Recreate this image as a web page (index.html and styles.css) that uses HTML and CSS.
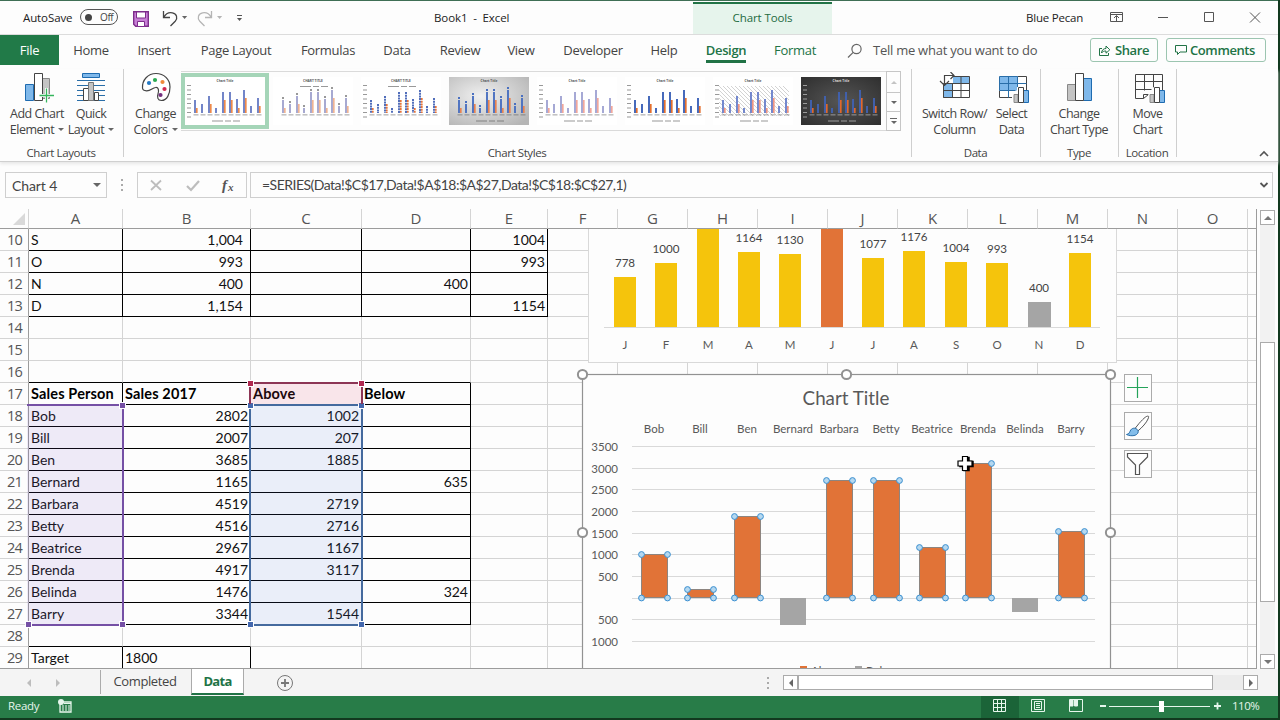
FILE: index.html
```html
<!DOCTYPE html>
<html lang="en">
<head>
<meta charset="utf-8">
<title>Book1 - Excel</title>
<link rel="stylesheet" href="styles.css">
</head>
<body>
<div class="window">
  <header class="titlebar">
    <span class="autosave">AutoSave</span>
    <span class="toggle"><i></i>Off</span>
    <svg class="quick" width="120" height="32" viewBox="130 1 120 32" fill="none">
      <path d="M133.7 10.700h14.6v14.6h-12.6l-2-2z" fill="#c77fd6" stroke="#7d2d8b" stroke-width="1.4"/>
      <path d="M136.500 11h9v6h-9z" fill="#fff" stroke="#7d2d8b"/><path d="M137.500 20.500h7v5h-7z" fill="#fff" stroke="#7d2d8b"/>
      <path d="M163.500 10v6.500h6.500M163.800 16.200c2-3.600 5.500-5 8.600-4.400 4.300.8 5.700 5.200 2.800 8.400L170.500 25" stroke="#444" stroke-width="1.300"/>
      <path d="M182 15h5.200l-2.600 3z" fill="#666"/>
      <path d="M211.500 10v6.500h-6.500M211.200 16.200c-2-3.600-5.500-5-8.600-4.400-4.300.8-5.700 5.200-2.800 8.400L204.500 25" stroke="#b5b5b5" stroke-width="1.300"/>
      <path d="M217 15h5.200l-2.600 3z" fill="#b5b5b5"/>
      <path d="M237 14.500h5" stroke="#555"/><path d="M237 17h5l-2.500 3z" fill="#555"/>
    </svg>
    <span class="doc">Book1&nbsp; -&nbsp; Excel</span>
    <span class="context">Chart Tools</span>
    <span class="user">Blue Pecan</span>
    <svg class="controls" width="160" height="32" viewBox="1105 1 160 32" fill="none" stroke="#555">
      <path d="M1110.500 11.500h12v9h-12zM1110.500 13.500h12M1116.500 20v-5M1114 17l2.500-2.500 2.500 2.500"/>
      <path d="M1158 16.500h10M1204.500 11.500h9v9h-9zM1250 11.500l10 10M1260 11.500l-10 10"/>
    </svg>
  </header>

  <nav class="tabs">
    <a class="tab file">File</a><a class="tab home">Home</a><a class="tab insert">Insert</a><a class="tab layout">Page Layout</a><a class="tab formulas">Formulas</a><a class="tab data">Data</a><a class="tab review">Review</a><a class="tab view">View</a><a class="tab developer">Developer</a><a class="tab help">Help</a><a class="tab design"><b>Design</b></a><a class="tab format">Format</a>
    <svg class="search" width="16" height="16" viewBox="0 0 16 16" fill="none" stroke="#666" stroke-width="1.200"><circle cx="9.500" cy="6" r="4.600"/><path d="M6.200 9.300L1 14.500"/></svg>
    <span class="tell">Tell me what you want to do</span>
    <a class="pill share"><svg width="13" height="13" viewBox="0 0 13 13" fill="none" stroke="#217346"><path d="M4 4.500H1.500v7h9V9M3.500 9c.3-3 2-4.500 4.500-4.500V2l3.800 3.800L8 9.200V7c-2 0-3.500.5-4.500 2z"/></svg>Share</a>
    <a class="pill comments"><svg width="12" height="12" viewBox="0 0 12 12" fill="none" stroke="#217346"><path d="M.5 1.500h11v6.500H5L2.500 10.500V8h-2z"/></svg>Comments</a>
  </nav>

  <section class="ribbon">
    <div class="group g-layouts">
      <div class="items">
        <div class="big add"><svg width="32" height="32" viewBox="0 0 32 32"><path d="M3.500 12.500h8v16h-8z" fill="#7fb8ea" stroke="#1e6bb0"/><path d="M20.500 6.500h7v20h-7z" fill="#c4c4c4" stroke="#888"/><path d="M12.500 1.500h8v27h-8z" fill="#fff" stroke="#444"/><path d="M24.500 16v15M17 23.500h15" stroke="#fff" stroke-width="3"/><path d="M24.500 16.500v14M17.500 23.500h14.500" stroke="#35b55c" stroke-width="1.300"/></svg><span>Add Chart</span><span>Element<i class="dd"></i></span></div>
        <div class="big quickl"><svg width="32" height="32" viewBox="0 0 32 32"><path d="M7.500 1.500h17v4h-17z" fill="#7fb8ea" stroke="#1e6bb0"/><path d="M2 8.500h28M2 13.500h28M2 18.500h28M2 23.500h28M2 28.500h28" stroke="#2a6ea8" stroke-width="1.200"/><path d="M8.500 16.500h6v12h-6zM19.500 20.500h4v8h-4z" fill="#fff" stroke="#444"/><path d="M13.500 10.500h5v18h-5z" fill="#c4c4c4" stroke="#777"/></svg><span>Quick</span><span>Layout<i class="dd"></i></span></div>
      </div><p>Chart Layouts</p>
    </div>
    <div class="group g-styles">
      <div class="items">
        <div class="big colors"><svg width="32" height="32" viewBox="0 0 32 32"><path d="M2.500 16C2 8 8 1.500 16 1.500s14 6 14 13.500c0 7-3 13.500-8.500 13.500-4 0-4.500-3.500-3.500-6.500 1.200-3.500.5-7-2.500-6.500-3 .4-5 3.500-9 3.300-2.500-.1-3.800-1-4-2.800z" fill="#fff" stroke="#444" stroke-width="1.200"/><circle cx="9" cy="11" r="2.100" fill="#2479c4"/><circle cx="15" cy="8" r="2.100" fill="#2bab54"/><circle cx="22.500" cy="10" r="2.100" fill="#f0883a"/><circle cx="24.500" cy="17" r="2.100" fill="#d1284f"/><circle cx="20.500" cy="23" r="2.100" fill="#74307f"/></svg><span>Change</span><span>Colors<i class="dd"></i></span></div>
        <div class="gallery" id="gallery"></div>
        <div class="spin"><b class="up"></b><b class="down"></b><b class="more"></b></div>
      </div><p>Chart Styles</p>
    </div>
    <div class="group g-data">
      <div class="items">
        <div class="big switch"><svg width="32" height="32" viewBox="0 0 32 32" fill="none"><path d="M4.500 4.500h26v21h-26z" fill="#fff"/><path d="M13 4.500h17.500v7H13zM4.500 11.500h9v14h-9z" fill="#7fb8ea"/><path d="M4.500 25.500v-8M13.500 4.500h17v21h-26v-14M4.500 18.500h26M4.500 11.500h26M13.500 4.500v21M22 4.500v21" stroke="#444"/><path d="M2 0h12v11H2z" fill="#fff"/><path d="M15 3.500H5.500V13M11.500 0L15 3.500 11.500 7M1 9L5.500 13.500 10 9" stroke="#444" stroke-width="1.200"/></svg><span>Switch Row/</span><span>Column</span></div>
        <div class="big select"><svg width="32" height="32" viewBox="0 0 32 32" fill="none"><path d="M2.500 4.500h27v21h-27z" fill="#fff"/><path d="M2.500 4.500h18v14h-18z" fill="#7fb8ea"/><path d="M20.500 4.500h9v14M2.500 18.500v7h14" stroke="#444"/><path d="M20.500 4.500h-18v14M2.500 11.500h27M2.500 18.500h16M11.500 4.500v21M20.500 4.500v14" stroke="#2a6ea8"/><path d="M15 21h5v-6h8v4h4v13H15z" fill="#fff"/><path d="M17 22.500h4v8h-4z" fill="#c4c4c4" stroke="#888"/><path d="M26.500 18.500h5v12h-5z" fill="#7fb8ea" stroke="#1e6bb0"/><path d="M21.500 15.500h5v15h-5z" fill="#fff" stroke="#444"/></svg><span>Select</span><span>Data</span></div>
      </div><p>Data</p>
    </div>
    <div class="group g-type">
      <div class="items"><div class="big type"><svg width="32" height="32" viewBox="0 0 32 32"><path d="M3.500 12.500h8v16h-8z" fill="#c4c4c4" stroke="#888"/><path d="M19.500 6.500h8v22h-8z" fill="#7fb8ea" stroke="#1e6bb0"/><path d="M11.500 1.500h8v27h-8z" fill="#fff" stroke="#444"/></svg><span>Change</span><span>Chart Type</span></div></div><p>Type</p>
    </div>
    <div class="group g-loc">
      <div class="items"><div class="big move"><svg width="32" height="32" viewBox="0 0 32 32" fill="none"><path d="M2.500 2.500h27v16M2.500 2.500v24h8l5-4M2.500 9.500h27M2.500 17.500h16M11.500 2.500v16M20.500 2.500v13" stroke="#444"/><path d="M10.500 26.500v-4h5" stroke="#444"/><path d="M15.500 21h5v-6h8v4h4v13h-17z" fill="#fff"/><path d="M17 22.500h4v8h-4z" fill="#c4c4c4" stroke="#888"/><path d="M26.500 18.500h5v12h-5z" fill="#7fb8ea" stroke="#1e6bb0"/><path d="M21.500 15.500h5v15h-5z" fill="#fff" stroke="#444"/></svg><span>Move</span><span>Chart</span></div></div><p>Location</p>
    </div>
    <svg class="collapse" width="10" height="8" viewBox="0 0 10 8" fill="none" stroke="#555" stroke-width="1.600"><path d="M1 6l4-4 4 4"/></svg>
  </section>

  <section class="formula">
    <div class="namebox">Chart 4<i class="dd"></i></div>
    <div class="dots"><i></i><i></i><i></i></div>
    <div class="fx"><svg width="108" height="24" viewBox="0 0 108 24" fill="none"><path d="M13 7.500l10 9.500M23 7.500L13 17" stroke="#bdbdbd" stroke-width="1.800"/><path d="M49 13l4 4 8-9" stroke="#bdbdbd" stroke-width="2.200"/><text x="84" y="17" class="fxt">f</text><text x="90" y="17.500" class="fxs">x</text></svg></div>
    <div class="input">=SERIES(Data!$C$17,Data!$A$18:$A$27,Data!$C$18:$C$27,1)<svg width="10" height="8" viewBox="0 0 10 8" fill="none" stroke="#555" stroke-width="1.800"><path d="M1.500 2L5 5.500 8.500 2"/></svg></div>
  </section>

  <main class="work">
    <div class="sheet">
      <div class="grid" id="grid"></div>
      <div class="range purple"><i></i><i></i><i></i></div>
      <div class="range blue"><i></i><i></i><i></i><i></i></div>
      <div class="range red"><i></i><i></i></div>
      <svg class="charts" id="charts" width="680" height="440" viewBox="576 229 680 440"></svg>
    </div>
    <div class="vscroll"><b class="arrow up"></b><b class="track"></b><b class="thumb"></b><b class="track rest"></b><b class="arrow down"></b></div>
  </main>

  <div class="sheets">
    <svg width="113" height="26" viewBox="0 669 113 26"><path d="M31 678v8l-4-4zM56 678v8l4-4z" fill="#bdbdbd"/></svg>
    <span class="sheettab">Completed</span><span class="sheettab active">Data</span>
    <svg class="plus" width="18" height="18" viewBox="0 0 18 18" fill="none" stroke="#777"><circle cx="9" cy="9" r="7.500"/><path d="M9 5v8M5 9h8" stroke-width="1.800"/></svg>
    <div class="dots"><i></i><i></i><i></i></div>
    <div class="hscroll"><b class="arrow left"></b><b class="hthumb"></b><b class="htrack"></b><b class="arrow right"></b></div>
  </div>
  <footer class="status">
    <span>Ready</span>
    <svg class="macro" width="14" height="14" viewBox="0 0 14 14" fill="none"><path d="M2 3h11v10H2z" stroke="#e6f6ec" stroke-width="1.300"/><path d="M4 7h2M7 7h2M10 7h2M4 9h2M7 9h2M10 9h2M4 11h2M7 11h2M10 11h2M6 4.500h7" stroke="#e6f6ec"/><circle cx="3" cy="3" r="3" fill="#e6f6ec"/></svg>
    <div class="viewbtn on"><svg width="14" height="14" viewBox="0 0 14 14" fill="none" stroke="#e6f6ec"><path d="M.5.500h12v12H.5zM4.500.500v12M8.500.500v12M.5 4.500h12M.5 8.500h12"/></svg></div>
    <div class="viewbtn"><svg width="14" height="14" viewBox="0 0 14 14" fill="none" stroke="#e6f6ec"><path d="M.5.500h13v12H.5zM3.500 2.500h7v8h-7zM5 4.500h4M5 6.500h4M5 8.500h4"/></svg></div>
    <div class="viewbtn"><svg width="14" height="14" viewBox="0 0 14 14" fill="none" stroke="#e6f6ec"><path d="M.5.500h13v12H.5z"/><path d="M1 1h3v6H1zM5.500 1h3v6h-3z" fill="#e6f6ec"/></svg></div>
    <svg class="zoomer" width="124" height="22" viewBox="0 0 124 22" stroke="#e6f6ec" fill="none"><path d="M1 11h6M115 11h7M118.500 7.500v7" stroke-width="1.800"/><path d="M10 11.500h101"/><path d="M60 6h5v11h-5z" fill="#fff" stroke="none"/></svg>
    <span class="pct">110%</span>
  </footer>
</div>
<script src="app.js"></script>
</body>
</html>
```
FILE: styles.css
```css
* { box-sizing: border-box; }
body { margin: 0; width: 1280px; height: 720px; overflow: hidden; background: #12391f; font-family: "Open Sans", "Noto Sans", sans-serif; color: #444; }
.window { width: 1278px; height: 718px; background: #fdfdfd; border-top: 1px solid #3f6f55; display: flex; flex-direction: column; white-space: nowrap; }
svg { display: block; flex: none; }
i { font-style: normal; }

.titlebar { height: 34px; flex: none; display: flex; align-items: center; border-bottom: 1px solid #dcdcdc; font-size: 11.5px; letter-spacing: -.1px; line-height: 16px; color: #222; padding-left: 23px; }
.autosave { width: 57px; }
.toggle { width: 38px; height: 16px; border: 1px solid #555; border-radius: 8px; font-size: 10px; letter-spacing: -.4px; line-height: 14px; display: flex; align-items: center; gap: 8px; padding-left: 4px; margin-bottom: 1px; color: #444; }
.toggle i { width: 7px; height: 7px; border-radius: 50%; background: #444; }
.quick { margin-left: 12px; }
.doc { margin-left: 184px; width: 259px; }
.context { width: 139px; height: 32px; margin-top: 1px; background: #e6f4ec; border-top: 2px solid #217346; color: #1e6b41; text-align: center; line-height: 28px; }
.user { margin-left: 194px; width: 79px; letter-spacing: -.2px; }

.tabs { height: 34px; flex: none; display: flex; font-size: 13px; letter-spacing: -.3px; }
.tab { height: 30px; line-height: 30px; text-align: center; flex: none; }
.file { width: 59px; background: #217a48; color: #fff; }
.home { width: 64px; } .insert { width: 62px; } .layout { width: 102px; } .formulas { width: 82px; } .data { width: 56px; } .review { width: 70px; } .view { width: 52px; } .developer { width: 92px; } .help { width: 50px; }
.design { width: 74px; color: #217346; } .format { width: 64px; color: #217346; }
.design b { display: inline-block; height: 28px; border-bottom: 3px solid #217346; letter-spacing: -.350px; font-weight: 600; }
.search { margin: 8px 10px 0 20px; }
.tell { line-height: 30px; width: 217px; color: #555; letter-spacing: -.25px; }
.pill { height: 24px; margin-top: 3px; border: 1px solid #9cc5b0; border-radius: 3px; color: #217346; font-weight: 600; display: flex; align-items: center; letter-spacing: -.4px; }
.share { width: 68px; padding-left: 7px; gap: 4px; } .comments { width: 100px; margin-left: 8px; padding-left: 8px; gap: 3px; }

.ribbon { height: 93px; flex: none; display: flex; border-bottom: 1px solid #d0d0d0; box-shadow: 0 2px 3px #e8e8e8; }
.group { height: 93px; position: relative; flex: none; }
.group::after { content: ""; position: absolute; right: 0; top: 0; width: 1px; height: 88px; background: #cfcfcf; }
.items { display: flex; height: 74px; }
.group p { margin: 0; text-align: center; font-size: 11.5px; line-height: 20px; letter-spacing: -.4px; padding-right: 2px; }
.g-layouts { width: 124px; } .g-styles { width: 788px; } .g-data { width: 129px; } .g-type { width: 78px; } .g-loc { width: 58px; }
.big { display: flex; flex-direction: column; align-items: center; font-size: 12.5px; letter-spacing: -.5px; line-height: 16px; padding-top: 3px; flex: none; }
.big svg { margin-bottom: 2px; }
.add { width: 66px; padding-left: 8px; } .quickl { width: 50px; } .colors { width: 57px; padding-left: 6px; }
.add svg { margin-left: 2px; }
.switch { width: 85px; } .select { width: 29px; } .type { width: 76px; } .move { width: 57px; }
.select svg, .type svg, .move svg { margin-left: 2px; }
.dd { display: inline-block; border: 3px solid transparent; border-top-color: #666; border-bottom: 0; margin-left: 4px; vertical-align: 3px; }
.gallery { display: flex; width: 705px; height: 60px; margin-top: 2px; border: 1px solid #dadada; border-right: 0; border-left: 0; gap: 8px; padding: 5px 0 0 4px; }
.gallery svg:first-child { outline: 4px solid #a5d5b8; }
.spin { width: 15px; height: 60px; margin-top: 2px; border: 1px solid #c6c6c6; display: grid; grid-template-rows: 21px 19px 18px; }
.spin b { display: flex; align-items: center; justify-content: center; border-bottom: 1px solid #c6c6c6; }
.spin b:last-child { border: 0; }
.spin b::before { content: ""; border: 3px solid transparent; border-bottom: 0; border-top-color: #666; }
.spin .up::before { border: 3px solid transparent; border-top: 0; border-bottom-color: #c4c4c4; }
.spin .more { flex-direction: column; gap: 2px; }
.spin .more::before { order: 2; } .spin .more::after { content: ""; width: 7px; height: 1px; background: #666; }
.collapse { margin: 81px 0 0 82px; }

.formula { display: flex; height: 47px; flex: none; padding: 10px 5px 0; font-family: Lato, sans-serif; font-size: 14px; }
.formula > div { height: 26px; }
.namebox { width: 102px; border: 1px solid #cfcfcf; padding: 0 5px 0 6px; display: flex; align-items: center; justify-content: space-between; letter-spacing: -.1px; }
.namebox .dd { border-width: 4px 4px 0; }
.dots { width: 30px; display: flex; flex-direction: column; align-items: center; justify-content: center; gap: 3px; }
.dots i { width: 2px; height: 2px; background: #aaa; }
.fx { width: 110px; border: 1px solid #cfcfcf; }
.fxt { font: italic 700 15px "Liberation Serif", serif; fill: #555; } .fxs { font: italic 700 11px "Liberation Serif", serif; fill: #555; }
.input { width: 1023px; margin-left: 3px; border: 1px solid #cfcfcf; padding: 0 3px 0 11px; display: flex; align-items: center; justify-content: space-between; letter-spacing: -.52px; line-height: 22px; }

.work { display: flex; height: 460px; flex: none; }
.sheet { width: 1257px; height: 460px; position: relative; overflow: hidden; border-right: 1px solid #9c9c9c; border-bottom: 1px solid #9c9c9c; }
.row { display: grid; grid-template-columns: 29px 94px 128px 111px 109px 77px repeat(10, 70px) 9px; height: 22px; }
.row span { border: 0 solid #d4d4d4; border-width: 0 1px 1px 0; font: 14px/21px Lato, sans-serif; color: #111; padding: 0 2px; overflow: hidden; }
.row .r { text-align: right; } .row .wide { padding-right: 7px; }
.row .b { font-weight: 700; font-size: 14.5px; letter-spacing: .15px; color: #000; }
.row .k { border-color: #000; } .row .kb { border-bottom-color: #000; }
.row .num { border-right-color: #9c9c9c; font: 14.5px/21px "Open Sans", sans-serif; color: #555; text-align: right; letter-spacing: -.8px; padding-right: 6px; }
.row.head { height: 20px; }
.row.head span { font: 15px/18px "Open Sans", sans-serif; color: #555; text-align: center; border-bottom-color: #9c9c9c; }
.row.head .corner { display: flex; justify-content: flex-end; align-items: flex-end; padding: 3px; }
.corner i { border: 6px solid #d9d9d9; border-top-color: transparent; border-left-color: transparent; }
.range { position: absolute; }
.range i { position: absolute; width: 7px; height: 7px; border: 1px solid #fff; }
.purple { left: 27px; top: 195px; width: 97px; height: 222px; border: 2px solid #7550a5; border-left: 0; background: #7a50c81c; } .purple i { background: #7550a5; }
.purple i:nth-child(1), .blue i:nth-child(2) { right: -4px; top: -4px; } .purple i:nth-child(2), .blue i:nth-child(4) { right: -4px; bottom: -4px; } .purple i:nth-child(3) { left: -2px; bottom: -4px; }
.blue { left: 249px; top: 195px; width: 114px; height: 222px; border: 2px solid #456a9e; background: #4070d81a; } .blue i { background: #4468ae; }
.blue i:nth-child(1) { left: -4px; top: -4px; } .blue i:nth-child(3) { left: -4px; bottom: -4px; }
.red { left: 249px; top: 173px; width: 114px; height: 22px; border: 2px solid #8d3555; border-bottom: 0; background: #e0406820; } .red i { background: #b02850; }
.red i:nth-child(1) { left: -4px; top: -4px; } .red i:nth-child(2) { right: -4px; top: -4px; }
.charts { position: absolute; left: 576px; top: 20px; font-family: Lato, sans-serif; }
.lbl { font-size: 11.6px; fill: #444; text-anchor: middle; } .cat { font-size: 11.5px; fill: #595959; text-anchor: middle; } .tick { font-size: 11.5px; fill: #595959; text-anchor: end; } .title { font-size: 18.8px; fill: #595959; text-anchor: middle; } .leg { font-size: 11.5px; fill: #595959; }
.vscroll { width: 21px; display: flex; flex-direction: column; align-items: center; padding-top: 1px; }
.arrow { width: 15px; height: 15px; border: 1px solid #ababab; background: #fff; display: flex; align-items: center; justify-content: center; flex: none; }
.arrow::before { content: ""; border: 4px solid transparent; }
.arrow.up::before { border-top: 0; border-bottom-color: #777; } .arrow.down::before { border-bottom: 0; border-top-color: #777; }
.arrow.left::before { border-left: 0; border-right-color: #666; } .arrow.right::before { border-right: 0; border-left-color: #666; }
.track { width: 15px; height: 117px; background: #f2f2f2; } .thumb { width: 15px; height: 260px; border: 1px solid #ababab; background: #fff; } .track.rest { height: 52px; }

.sheets { height: 27px; flex: none; background: #f4f4f4; display: flex; align-items: center; }
.sheettab { height: 24px; width: 91px; margin: 0 0 1px -13px; border-left: 1px solid #ababab; font-size: 13px; line-height: 23px; text-align: center; letter-spacing: -.4px; padding-right: 2px; }
.sheettab.active { width: 53px; height: 27px; margin: -2px 0 0 0; padding: 0; background: #fff; border: 1px solid #ababab; border-top: 0; border-bottom: 2px solid #217346; color: #217346; font-weight: 700; line-height: 26px; letter-spacing: -.7px; }
.plus { margin-left: 32px; }
.sheets .dots { margin-left: 459px; }
.hscroll { display: flex; width: 475px; background: #ececec; }
.hthumb { width: 415px; border: 1px solid #ababab; background: #fff; } .htrack { flex: 1; }
.status { height: 22px; flex: none; background: #287c48; color: #e6f6ec; display: flex; align-items: center; font-size: 11.5px; letter-spacing: -.3px; line-height: 20px; padding: 0 0 2px 8px; }
.status > span:first-child { width: 50px; }
.macro { margin-right: 909px; }
.viewbtn { width: 38px; height: 22px; margin-top: 2px; padding-bottom: 2px; display: flex; align-items: center; justify-content: center; } .viewbtn.on { background: #1b6438; }
.zoomer { margin-left: 4px; } .pct { margin-left: 9px; letter-spacing: -.5px; }
.tt { font: 700 3.2px "Open Sans", sans-serif; text-anchor: middle; }
```
FILE: app.js
```javascript
// Worksheet rows: [number, A, B, C, D, E]
const rows = [
  [10, 'S', '1,004', '', '', '1004'], [11, 'O', '993', '', '', '993'],
  [12, 'N', '400', '', '400', ''], [13, 'D', '1,154', '', '', '1154'],
  [14], [15], [16],
  [17, 'Sales Person', 'Sales 2017', 'Above', 'Below'],
  [18, 'Bob', '2802', '1002', ''], [19, 'Bill', '2007', '207', ''],
  [20, 'Ben', '3685', '1885', ''], [21, 'Bernard', '1165', '', '635'],
  [22, 'Barbara', '4519', '2719', ''], [23, 'Betty', '4516', '2716', ''],
  [24, 'Beatrice', '2967', '1167', ''], [25, 'Brenda', '4917', '3117', ''],
  [26, 'Belinda', '1476', '', '324'], [27, 'Barry', '3344', '1544', ''],
  [28], [29, 'Target', '1800']
];
let html = '<div class="row head"><span class="corner"><i></i></span>' +
  [...'ABCDEFGHIJKLMNO'].map(c => `<span>${c}</span>`).join('') + '<span></span></div>';
for (const r of rows) {
  const n = r[0];
  html += `<div class="row"><span class="num">${n}</span>`;
  for (let c = 1; c <= 16; c++) {
    const cls = [];
    const boxed = (n < 14 && c <= 5) || (n > 16 && n < 28 && c <= 4) || (n === 29 && c <= 2);
    if (boxed) cls.push('k');
    if ((n === 16 && c <= 4) || (n === 28 && c <= 2)) cls.push('kb');
    if (c > 1 && n !== 17 && n !== 29) cls.push('r');
    if (n < 14 && c === 2) cls.push('wide');
    if (n === 17) cls.push('b');
    html += `<span class="${cls.join(' ')}">${r[c] || ''}</span>`;
  }
  html += '</div>';
}
document.getElementById('grid').innerHTML = html;

const rect = (x, y, w, h, f, extra = '') => `<rect x="${x}" y="${y}" width="${w}" height="${h}" fill="${f}" ${extra}/>`;
const text = (x, y, cls, t) => `<text x="${x}" y="${y}" class="${cls}">${t}</text>`;
const line = (x1, y1, x2, y2, c) => `<path d="M${x1} ${y1}L${x2} ${y2}" stroke="${c}" fill="none"/>`;
const ring = (x, y) => `<circle cx="${x}" cy="${y}" r="4.600" fill="#fff" stroke="#929292" stroke-width="2"/>`;

// Monthly chart
let s = rect(588.5, 220, 528, 142.5, '#fdfdfd', 'stroke="#d9d9d9"') + line(604, 327.5, 1100, 327.5, '#d9d9d9');
[['J', 277, 778], ['F', 263, 1000], ['M', 229], ['A', 252, 1164], ['M', 254, 1130], ['J', 229], ['J', 258, 1077],
 ['A', 251, 1176], ['S', 262, 1004], ['O', 263, 993], ['N', 302, 400], ['D', 253, 1154]].forEach(([m, top, v], i) => {
  const x = Math.round(614 + i * 41.35);
  s += rect(x, top, m === 'N' ? 23 : 22, 327 - top, m === 'N' ? '#a5a5a5' : i === 5 ? '#e17337' : '#f5c40c');
  s += text(x + 11, 349, 'cat', m);
  if (v) s += text(x + 11, top - 10, 'lbl', v);
});

// Sales people chart
s += rect(582.5, 374.5, 528, 310, '#fdfdfd', 'stroke="#929292" stroke-width="1.200"') + text(846, 405, 'title', 'Chart Title');
['3500', '3000', '2500', '2000', '1500', '1000', '500', '', '500', '1000'].forEach((t, i) => {
  const y = Math.round(446 + i * 21.65);
  s += line(632, y + .5, 1095, y + .5, '#d9d9d9') + text(618, y + 5, 'tick', t);
});
let dots = '';
[['Bob', 554], ['Bill', 589], ['Ben', 516], ['Bernard', 625], ['Barbara', 480], ['Betty', 480], ['Beatrice', 547],
 ['Brenda', 463], ['Belinda', 612], ['Barry', 531]].forEach(([name, y], i) => {
  const x = Math.round(641 + i * 46.35);
  s += text(x + 13, 433, 'cat', name);
  if (y > 598) { s += rect(x, 598, 26, y - 598, '#a5a5a5'); return; }
  s += rect(x + .5, y + .5, 26, 597 - y, '#e17337', 'stroke="#8d8580"');
  [[x, y], [x + 26, y], [x, 597.5], [x + 26, 597.5]].forEach(([a, b]) => {
    dots += `<circle cx="${a + .5}" cy="${b + .5}" r="2.900" fill="#b5d8f0" stroke="#3a8fd0"/>`;
  });
});
s += dots + rect(800, 666, 7, 7, '#e17337') + text(811, 675, 'leg', 'Above') + rect(855, 666, 7, 7, '#a5a5a5') + text(866, 675, 'leg', 'Below');
s += ring(582.5, 374.5) + ring(846.5, 374.5) + ring(1110.5, 374.5) + ring(582.5, 532.5) + ring(1110.5, 532.5);

// Chart side buttons: elements, styles, filters
[374.5, 412.5, 450.5].forEach(y => { s += rect(1124.5, y, 27, 27, '#fdfdfd', 'stroke="#ababab"'); });
s += '<path d="M1137.500 377v21M1127 387.500h21" stroke="#25a35a" stroke-width="1.200"/>';
s += '<path d="M1148.500 416.300c-1.500-.8-4 1-9.500 7.200l-4 5 2.800 2.500c4.500-3.500 8.700-8.500 10.200-12 .5-1.500.9-2.200.5-2.700z" fill="#fff" stroke="#555"/>';
s += '<path d="M1126.500 434.500c3-.5 3-2.500 4.200-4.500 1.800-2.500 5.500-2.500 7.300.5.8 1.800-.5 4-3 4.800-2.500.8-6 .5-8.500-.8z" fill="#83bdea" stroke="#2a6ea8"/>';
s += '<path d="M1127.500 453.500h20v3.500l-8 8v9.500h-4V465l-8-8z" fill="#fff" stroke="#555" stroke-width="1.200"/>';
// Cell-select pointer
s += '<path d="M963 457.500h5v4h4v5h-4v4h-5v-4h-4v-5h4z" transform="translate(1 0)" fill="#000" stroke="#000" stroke-width="1.500"/>';
s += '<path d="M962.500 456.500h5v4.500h4.500v5h-4.500v4.500h-5v-4.500h-4.500v-5h4.500z" fill="#fff" stroke="#000" stroke-width="1.200"/>';
document.getElementById('charts').innerHTML = s;

// Chart style thumbnails
const blueH = [13, 9, 17, 5, 21, 21, 14, 23, 7, 15];
const orangeH = [5, 0, 9, 0, 13, 13, 5, 15, 0, 7];
const styles = [
  { a: '#6c7fc6', b: '#ee8a4b' },
  { a: '#a3a5cf', b: '#f0b493', caps: 1, top: 1 },
  { a: '#4a68b8', b: '#e5743a', caps: 1, top: 1, dash: 1 },
  { a: '#4a70c0', b: '#e98350', bg: 'url(#silver)', dots: 1 },
  { a: '#a2a5d3', b: '#f2a79b' },
  { a: '#3d62b8', b: '#e5702e' },
  { a: '#6d83cc', b: '#ef9683', hatch: 1 },
  { a: '#4161b0', b: '#e0682c', bg: 'url(#dark)', ink: '#ddd' }
];
document.getElementById('gallery').innerHTML = styles.map((o, k) => {
  const ink = o.ink || '#555';
  let g = k === 3 ? '<defs><radialGradient id="silver" cx=".4" cy=".4" r=".75"><stop stop-color="#f0f0f0"/><stop offset="1" stop-color="#b5b5b5"/></radialGradient></defs>' : '';
  if (k === 7) g += '<defs><radialGradient id="dark" cx=".5" cy=".5" r=".7"><stop stop-color="#555"/><stop offset="1" stop-color="#2f2f2f"/></radialGradient></defs>';
  g += rect(0, 0, 80, 48, o.bg || '#fff');
  if (o.hatch) for (let i = 0; i < 24; i++) {
    const x = 6 + i * 4 - 28, a = Math.max(6, x), b = Math.min(76, x + 30);
    if (b > a) g += `<path d="M${a} ${9 + a - x}L${b} ${9 + b - x}" stroke="#b5b5b5" stroke-width=".6"/>`;
  }
  g += `<text x="40" y="5" class="tt" fill="${ink}">${o.top ? 'CHART TITLE' : 'Chart Title'}</text>`;
  if (k !== 1 && k !== 3) for (let i = 0; i < 8; i++) g += rect(2, 8 + i * 4.5, 4, 1, ink, 'opacity=".6"');
  blueH.forEach((h, i) => {
    const x = 9 + i * 7;
    g += `<path d="M${x + 1} ${36 - h}V36" stroke="${o.a}" stroke-width="1.900" ${o.dash ? 'stroke-dasharray="2 .7"' : ''}/>`;
    if (orangeH[i]) g += `<path d="M${x + 2.8} ${36 - orangeH[i]}V36" stroke="${o.b}" stroke-width="1.700" ${o.dash ? 'stroke-dasharray="2 .7"' : ''}/>`;
    if (o.dots || k === 1) g += rect(x, 33 - h, 2, 2, k === 1 ? '#999' : '#4a70c0');
    g += rect(x - .5, 37.5, 5, .8, ink, 'opacity=".7"');
  });
  const ly = o.top ? 9 : 43.5;
  g += rect(27, ly, 11, 1, ink, 'opacity=".6"') + rect(40, ly, 6, 1, ink, 'opacity=".6"') + rect(48, ly, 7, 1, ink, 'opacity=".6"');
  return `<svg width="80" height="48" viewBox="0 0 80 48">${g}</svg>`;
}).join('');
```
